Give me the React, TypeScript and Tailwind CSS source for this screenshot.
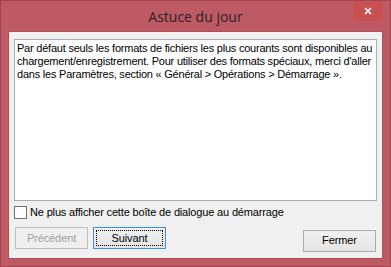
import { X } from "lucide-react";

const font = { fontFamily: '"Liberation Sans", Arial, sans-serif' };

function Button({
  label,
  disabled,
  focused,
}: {
  label: string;
  disabled?: boolean;
  focused?: boolean;
}) {
  return (
    <button
      disabled={disabled}
      className={`relative h-[22px] w-[73px] border text-[11px] leading-none tracking-[-0.1px] ${
        disabled
          ? "border-[#bfbfbf] bg-[#efefef] text-[#a0a0a0]"
          : focused
            ? "border-[#3c8ee6] bg-gradient-to-b from-[#f0f0f0] to-[#e5e5e5] text-[#000]"
            : "border-[#acacac] bg-gradient-to-b from-[#f0f0f0] to-[#e5e5e5] text-[#000]"
      }`}
    >
      {focused && (
        <span className="absolute inset-[2px] border border-dotted border-black" />
      )}
      <span className="relative">{label}</span>
    </button>
  );
}

export default function App() {
  return (
    <div
      className="relative flex h-[267px] w-[391px] flex-col border border-[#a2434f] bg-[#bd5a64] px-[7px] pb-[7px]"
      style={font}
    >
      {/* barre de titre */}
      <div className="flex h-[30px] items-center justify-center">
        <span
          className="text-[14px] text-[#2e2224]"
          style={{ fontFamily: '"Open Sans", "Noto Sans", sans-serif' }}
        >
          Astuce du jour
        </span>
      </div>
      <div className="absolute right-[7px] top-0 flex h-[20px] w-[30px] items-center justify-center bg-[#c75050]">
        <X className="h-[10px] w-[10px] text-white" strokeWidth={4} />
      </div>

      {/* zone cliente */}
      <div className="flex flex-1 flex-col border border-[#b04f5a] bg-[#f0f0f0] px-[5px] pt-[7px]">
        <div className="h-[162px] whitespace-nowrap border border-[#abadb3] bg-white px-[2px] pt-[2px] text-[11px] leading-[13px] tracking-[-0.22px] text-black">
          <div>Par défaut seuls les formats de fichiers les plus courants sont disponibles au</div>
          <div>chargement/enregistrement. Pour utiliser des formats spéciaux, merci d'aller</div>
          <div>dans les Paramètres, section « Général &gt; Opérations &gt; Démarrage ».</div>
        </div>

        <label className="mt-[4px] flex h-[14px] items-center gap-[3px] text-[11px] tracking-[-0.16px] text-black">
          <span className="h-[13px] w-[13px] border border-[#707070] bg-white" />
          Ne plus afficher cette boîte de dialogue au démarrage
        </label>

        <div className="mt-[8px] flex items-start">
          <div className="ml-[1px] flex gap-[5px]">
            <Button label="Précédent" disabled />
            <Button label="Suivant" focused />
          </div>
          <div className="ml-auto mr-[1px]">
            <Button label="Fermer" />
          </div>
        </div>
      </div>
    </div>
  );
}
